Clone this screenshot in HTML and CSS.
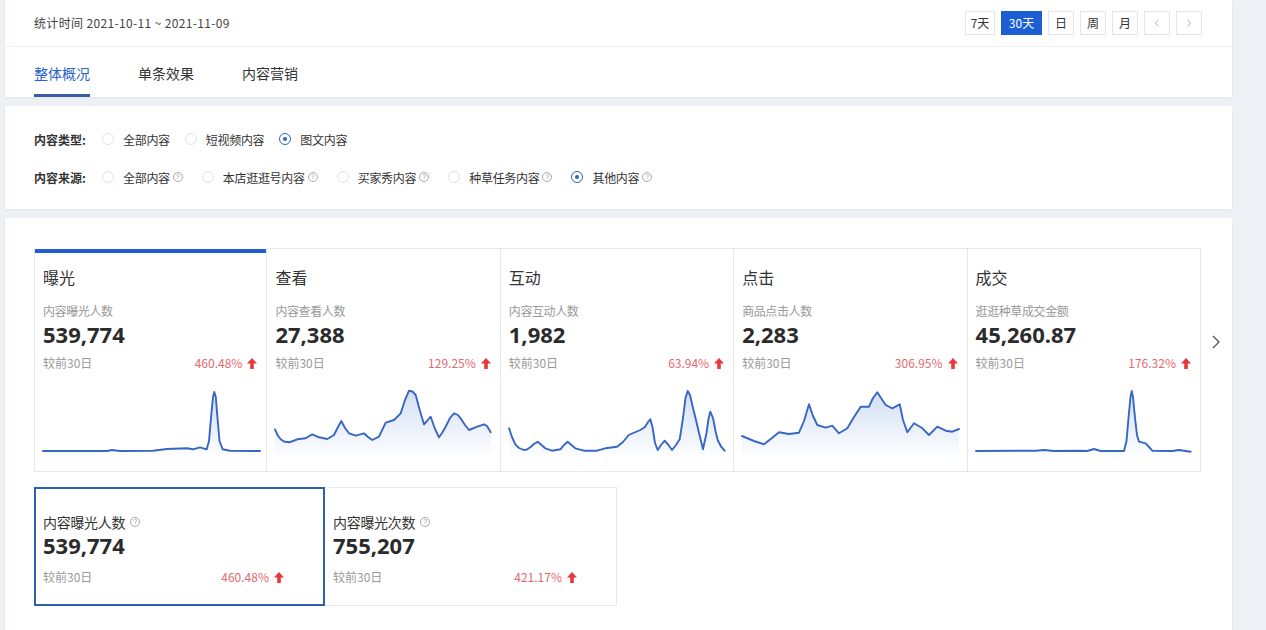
FILE: index.html
```html
<!DOCTYPE html>
<html lang="zh-CN">
<head>
<meta charset="utf-8">
<title>内容分析</title>
<link rel="stylesheet" href="styles.css">
</head>
<body>
<div class="page">
  <section class="panel head">
    <div class="toprow">
      <div class="date">统计时间 2021-10-11 ~ 2021-11-09</div>
      <div class="btns">
        <span class="btn w30">7天</span>
        <span class="btn w41 on">30天</span>
        <span class="btn">日</span>
        <span class="btn">周</span>
        <span class="btn">月</span>
        <span class="btn dim"><svg width="8" height="10" viewBox="0 0 8 10"><path d="M5.5 1.5 2.5 5l3 3.5" fill="none" stroke="#c4c4c4" stroke-width="1.1"/></svg></span>
        <span class="btn dim"><svg width="8" height="10" viewBox="0 0 8 10"><path d="M2.5 1.5 5.5 5l-3 3.5" fill="none" stroke="#c4c4c4" stroke-width="1.1"/></svg></span>
      </div>
    </div>
    <nav class="tabs">
      <span class="tab on">整体概况</span>
      <span class="tab">单条效果</span>
      <span class="tab">内容营销</span>
    </nav>
  </section>

  <section class="panel filters">
    <div class="frow">
      <span class="flabel">内容类型:</span>
      <span class="opt"><i class="radio"></i>全部内容</span>
      <span class="opt"><i class="radio"></i>短视频内容</span>
      <span class="opt"><i class="radio checked"></i>图文内容</span>
    </div>
    <div class="frow">
      <span class="flabel">内容来源:</span>
      <span class="opt"><i class="radio"></i>全部内容<i class="help">?</i></span>
      <span class="opt"><i class="radio"></i>本店逛逛号内容<i class="help">?</i></span>
      <span class="opt"><i class="radio"></i>买家秀内容<i class="help">?</i></span>
      <span class="opt"><i class="radio"></i>种草任务内容<i class="help">?</i></span>
      <span class="opt"><i class="radio checked"></i>其他内容<i class="help">?</i></span>
    </div>
  </section>

  <section class="panel main">
    <div class="cardrow">
      <div class="cards">
        <div class="card active">
          <div class="ctitle">曝光</div>
          <div class="clabel">内容曝光人数</div>
          <div class="cnum">539,774</div>
          <div class="ccmp"><span>较前30日</span><span class="pct">460.48%<svg class="up" width="10" height="11" viewBox="0 0 10 11"><path d="M5 0 10 5.5H6.8V11H3.2V5.5H0Z" fill="#e8383d"/></svg></span></div>
          <svg class="chart" viewBox="0 0 217 72" preserveAspectRatio="none">
            <defs>
              <linearGradient id="fillg" x1="0" y1="0" x2="0" y2="1">
                <stop offset="0" stop-color="#4a7bd6" stop-opacity="0.24"/>
                <stop offset="1" stop-color="#4a7bd6" stop-opacity="0.02"/>
              </linearGradient>
            </defs>
            <path class="area" d="M0,68 L64,68 69,67 77,68 110,67.7 124,66 144,65.3 150,66.3 157,64.3 163.7,66.3 166,58 168,35 170,14 171.3,9 172.8,14 174.5,35 176.5,58 179.7,66.3 187,67.7 217,68 L217,72 L0,72Z"/>
            <polyline class="line" points="0,68 64,68 69,67 77,68 110,67.7 124,66 144,65.3 150,66.3 157,64.3 163.7,66.3 166,58 168,35 170,14 171.3,9 172.8,14 174.5,35 176.5,58 179.7,66.3 187,67.7 217,68"/>
          </svg>
        </div>
        <div class="card">
          <div class="ctitle">查看</div>
          <div class="clabel">内容查看人数</div>
          <div class="cnum">27,388</div>
          <div class="ccmp"><span>较前30日</span><span class="pct">129.25%<svg class="up" width="10" height="11" viewBox="0 0 10 11"><path d="M5 0 10 5.5H6.8V11H3.2V5.5H0Z" fill="#e8383d"/></svg></span></div>
          <svg class="chart" viewBox="0 0 217 72" preserveAspectRatio="none">
            <path class="area" d="M0,46.3 L2.5,52 5.7,56.3 9,58.5 14,59.3 18,58 22.3,56.3 30.7,55.3 37.3,51.3 44,54.3 52.3,56 59,52 63,44 66.3,38 70,45 74,50.3 80.7,52.7 89,50.3 93,54 97.3,57 104,53.7 110.7,39.7 119,37 125.7,30.3 130,17 134,7.7 137.5,8.5 140.7,12 145,28 149,41.3 152,38 155.7,33.7 160,46 164,54.3 167,50 170.7,43.7 175,35 179,30.3 183,32 186.3,36.3 190,42 194,47 202.3,43.7 209,41.3 212,43 215.7,49.3 L215.7,72 L0,72Z"/>
            <polyline class="line" points="0,46.3 2.5,52 5.7,56.3 9,58.5 14,59.3 18,58 22.3,56.3 30.7,55.3 37.3,51.3 44,54.3 52.3,56 59,52 63,44 66.3,38 70,45 74,50.3 80.7,52.7 89,50.3 93,54 97.3,57 104,53.7 110.7,39.7 119,37 125.7,30.3 130,17 134,7.7 137.5,8.5 140.7,12 145,28 149,41.3 152,38 155.7,33.7 160,46 164,54.3 167,50 170.7,43.7 175,35 179,30.3 183,32 186.3,36.3 190,42 194,47 202.3,43.7 209,41.3 212,43 215.7,49.3"/>
          </svg>
        </div>
        <div class="card">
          <div class="ctitle">互动</div>
          <div class="clabel">内容互动人数</div>
          <div class="cnum">1,982</div>
          <div class="ccmp"><span>较前30日</span><span class="pct">63.94%<svg class="up" width="10" height="11" viewBox="0 0 10 11"><path d="M5 0 10 5.5H6.8V11H3.2V5.5H0Z" fill="#e8383d"/></svg></span></div>
          <svg class="chart" viewBox="0 0 217 72" preserveAspectRatio="none">
            <path class="area" d="M0,45.3 L3,54 6.3,61.3 10,65 14.7,67 18,66.5 21.3,64.3 25,61 28.7,58.7 32.5,62 36.3,65.3 43,67.7 51.3,66.3 55,62 58.7,58.7 62.5,62 66.3,65.3 74.7,67.7 88,67.7 96.3,65.3 108,63.7 114,59 119.7,52 131.3,47 136,44 139,39 141.3,36.3 143.5,44 146,60 148.7,67 152,62 155.7,57.7 159.5,62 163,67 167,62 170.7,56.3 174,35 176.5,15 178.7,8 181,12 184,25 187,37 190.5,52 194,66.3 197.5,50 199.5,36 201.3,28.7 204,35 206.5,48 208.7,57 212,63.5 215.7,67.7 L215.7,72 L0,72Z"/>
            <polyline class="line" points="0,45.3 3,54 6.3,61.3 10,65 14.7,67 18,66.5 21.3,64.3 25,61 28.7,58.7 32.5,62 36.3,65.3 43,67.7 51.3,66.3 55,62 58.7,58.7 62.5,62 66.3,65.3 74.7,67.7 88,67.7 96.3,65.3 108,63.7 114,59 119.7,52 131.3,47 136,44 139,39 141.3,36.3 143.5,44 146,60 148.7,67 152,62 155.7,57.7 159.5,62 163,67 167,62 170.7,56.3 174,35 176.5,15 178.7,8 181,12 184,25 187,37 190.5,52 194,66.3 197.5,50 199.5,36 201.3,28.7 204,35 206.5,48 208.7,57 212,63.5 215.7,67.7"/>
          </svg>
        </div>
        <div class="card">
          <div class="ctitle">点击</div>
          <div class="clabel">商品点击人数</div>
          <div class="cnum">2,283</div>
          <div class="ccmp"><span>较前30日</span><span class="pct">306.95%<svg class="up" width="10" height="11" viewBox="0 0 10 11"><path d="M5 0 10 5.5H6.8V11H3.2V5.5H0Z" fill="#e8383d"/></svg></span></div>
          <svg class="chart" viewBox="0 0 217 72" preserveAspectRatio="none">
            <path class="area" d="M0,53 L12,58 22,61.3 30,55 37,49.3 47,51 57,49.7 62,38 67,21.3 71,33 75.3,42 83.7,44.7 90.3,42.7 97,50.3 105.3,45.3 112,34 118.7,23.7 127,23.7 131,15 135.3,9.3 139,15 143.7,22 150.3,25.3 157.7,21.3 161,37 165.3,49.3 172,40.3 179.7,44.7 187,52 195.3,43.7 203.7,47.7 210.3,48.7 217,46 L217,72 L0,72Z"/>
            <polyline class="line" points="0,53 12,58 22,61.3 30,55 37,49.3 47,51 57,49.7 62,38 67,21.3 71,33 75.3,42 83.7,44.7 90.3,42.7 97,50.3 105.3,45.3 112,34 118.7,23.7 127,23.7 131,15 135.3,9.3 139,15 143.7,22 150.3,25.3 157.7,21.3 161,37 165.3,49.3 172,40.3 179.7,44.7 187,52 195.3,43.7 203.7,47.7 210.3,48.7 217,46"/>
          </svg>
        </div>
        <div class="card">
          <div class="ctitle">成交</div>
          <div class="clabel">逛逛种草成交金额</div>
          <div class="cnum">45,260.87</div>
          <div class="ccmp"><span>较前30日</span><span class="pct">176.32%<svg class="up" width="10" height="11" viewBox="0 0 10 11"><path d="M5 0 10 5.5H6.8V11H3.2V5.5H0Z" fill="#e8383d"/></svg></span></div>
          <svg class="chart" viewBox="0 0 217 72" preserveAspectRatio="none">
            <path class="area" d="M0,68 L59.7,67.7 68,67 78,68 103,67.7 111.3,68 118,66 124.7,68 148,68 150.5,58 152.5,35 154.5,14 155.7,8 157,14 159,35 161,52 163,58.7 169.7,60.3 173,64 176.3,67.7 196.3,68 203,67 214.7,68.7 L214.7,72 L0,72Z"/>
            <polyline class="line" points="0,68 59.7,67.7 68,67 78,68 103,67.7 111.3,68 118,66 124.7,68 148,68 150.5,58 152.5,35 154.5,14 155.7,8 157,14 159,35 161,52 163,58.7 169.7,60.3 173,64 176.3,67.7 196.3,68 203,67 214.7,68.7"/>
          </svg>
        </div>
      </div>
      <div class="next"><svg width="10" height="16" viewBox="0 0 10 16"><path d="M2 2 8 8l-6 6" fill="none" stroke="#555" stroke-width="1.3"/></svg></div>
    </div>

    <div class="subcards">
      <div class="sub active">
        <div class="slabel">内容曝光人数<i class="help">?</i></div>
        <div class="cnum">539,774</div>
        <div class="ccmp"><span>较前30日</span><span class="pct">460.48%<svg class="up" width="10" height="11" viewBox="0 0 10 11"><path d="M5 0 10 5.5H6.8V11H3.2V5.5H0Z" fill="#e8383d"/></svg></span></div>
      </div>
      <div class="sub">
        <div class="slabel">内容曝光次数<i class="help">?</i></div>
        <div class="cnum">755,207</div>
        <div class="ccmp"><span>较前30日</span><span class="pct">421.17%<svg class="up" width="10" height="11" viewBox="0 0 10 11"><path d="M5 0 10 5.5H6.8V11H3.2V5.5H0Z" fill="#e8383d"/></svg></span></div>
      </div>
    </div>
  </section>
</div>
</body>
</html>
```

FILE: styles.css
```css
* { box-sizing: border-box; }
html, body { margin: 0; padding: 0; }
body {
  background: #eef0f5;
  font-family: "Noto Sans CJK SC", "Noto Sans", sans-serif;
  color: #333;
  font-size: 12px;
}
.page {
  width: 1232px;
  padding-left: 5px;
}
.panel {
  background: #fff;
  box-shadow: 0 1px 3px rgba(0, 0, 0, 0.05);
}

/* header */
.head { padding: 0 30px 0 29px; }
.toprow {
  height: 47px;
  display: flex;
  align-items: center;
  justify-content: space-between;
  border-bottom: 1px solid #efefef;
  margin: 0 -30px 0 -29px;
  padding: 0 30px 0 29px;
}
.date { font-size: 12px; color: #444; line-height: 16px; letter-spacing: 0.35px; }
.btns { display: flex; gap: 6px; margin-top: -1px; }
.btn {
  height: 24px;
  min-width: 26px;
  padding: 0 5px;
  border: 1px solid #e4e4e4;
  display: flex;
  align-items: center;
  justify-content: center;
  font-size: 12px;
  color: #333;
  background: #fff;
  white-space: nowrap;
}
.btn.w30 { width: 30px; padding: 0; }
.btn.w41 { width: 41px; padding: 0; }
.btn.on { background: #1c5fd5; border-color: #1c5fd5; color: #fff; }
.tabs { display: flex; gap: 48px; height: 50px; }
.tab {
  font-size: 14px;
  line-height: 20px;
  padding-top: 16px;
  height: 50px;
  color: #333;
  border-bottom: 3px solid transparent;
}
.tab.on { color: #2a62c9; border-bottom-color: #3b5fa6; }

/* filters */
.filters {
  margin-top: 9px;
  height: 103px;
  padding: 23px 29px 0;
}
.frow { display: flex; align-items: center; height: 20px; }
.frow + .frow { margin-top: 18px; }
.flabel { width: 68px; font-weight: 700; color: #333; font-size: 12px; }
.opt {
  display: inline-flex;
  align-items: center;
  font-size: 12px;
  color: #333;
  margin-right: 15px;
  letter-spacing: -0.3px;
}
.radio {
  width: 12px;
  height: 12px;
  border-radius: 50%;
  border: 1px solid #e2e2e2;
  margin-right: 9px;
  display: inline-flex;
  align-items: center;
  justify-content: center;
}
.radio.checked { border-color: #2d63c8; }
.radio.checked::after {
  content: "";
  width: 4px;
  height: 4px;
  border-radius: 50%;
  background: #2d63c8;
}
.help {
  font-style: normal;
  width: 10px;
  height: 10px;
  border: 1px solid #aaa;
  border-radius: 50%;
  color: #999;
  font-size: 7px;
  line-height: 8px;
  text-align: center;
  margin-left: 3px;
  margin-right: 4px;
  display: inline-block;
  font-family: "Liberation Sans", sans-serif;
  letter-spacing: 0;
}

/* main */
.main {
  margin-top: 9px;
  padding: 30px 0 40px 29px;
  min-height: 420px;
}
.cardrow { display: flex; }
.cards {
  display: grid;
  grid-template-columns: repeat(5, 233.4px);
}
.card {
  border: 1px solid #e8e8e8;
  height: 224px;
  padding: 17px 7px 0 8px;
  display: flex;
  flex-direction: column;
}
.card + .card { border-left: none; }
.card.active { box-shadow: inset 0 4px 0 #1f5fd3; border-top-color: #fff; }
.ctitle { font-size: 16px; line-height: 22px; color: #333; }
.clabel { font-size: 12px; line-height: 16px; color: #999; margin-top: 15px; letter-spacing: -0.4px; }
.cnum {
  font-family: "Noto Sans", sans-serif;
  font-weight: 700;
  font-size: 22px;
  line-height: 26px;
  color: #2b2b2b;
  margin-top: 2px;
}
.ccmp {
  display: flex;
  justify-content: space-between;
  align-items: center;
  font-size: 12px;
  line-height: 16px;
  color: #999;
  margin-top: 8px;
  padding-right: 2px;
}
.pct { color: #e26a70; display: inline-flex; align-items: center; gap: 5px; }
.up { display: block; }
.chart { width: 217px; height: 72px; margin-top: 12px; display: block; overflow: visible; }
.chart .line { fill: none; stroke: #3667c4; stroke-width: 1.9; stroke-linejoin: round; stroke-linecap: round; }
.chart .area { fill: url(#fillg); }
.next {
  width: 31px;
  display: flex;
  justify-content: center;
  padding-top: 86px;
}

.subcards { display: flex; margin-top: 15px; }
.sub {
  width: 291px;
  height: 119px;
  border: 1px solid #e8e8e8;
  padding: 24px 37px 0 8px;
}
.sub + .sub { border-left: none; width: 292px; padding-right: 37px; }
.sub.active { border-color: #2f5fae; box-shadow: inset 0 0 0 1px #2f5fae; padding-right: 38px; }
.slabel {
  font-size: 14px;
  line-height: 20px;
  color: #333;
  display: flex;
  align-items: center;
  letter-spacing: -0.3px;
}
.slabel .help { margin-left: 5px; }
.sub .cnum { margin-top: 0; }
.sub .ccmp { margin-top: 11px; }
```
